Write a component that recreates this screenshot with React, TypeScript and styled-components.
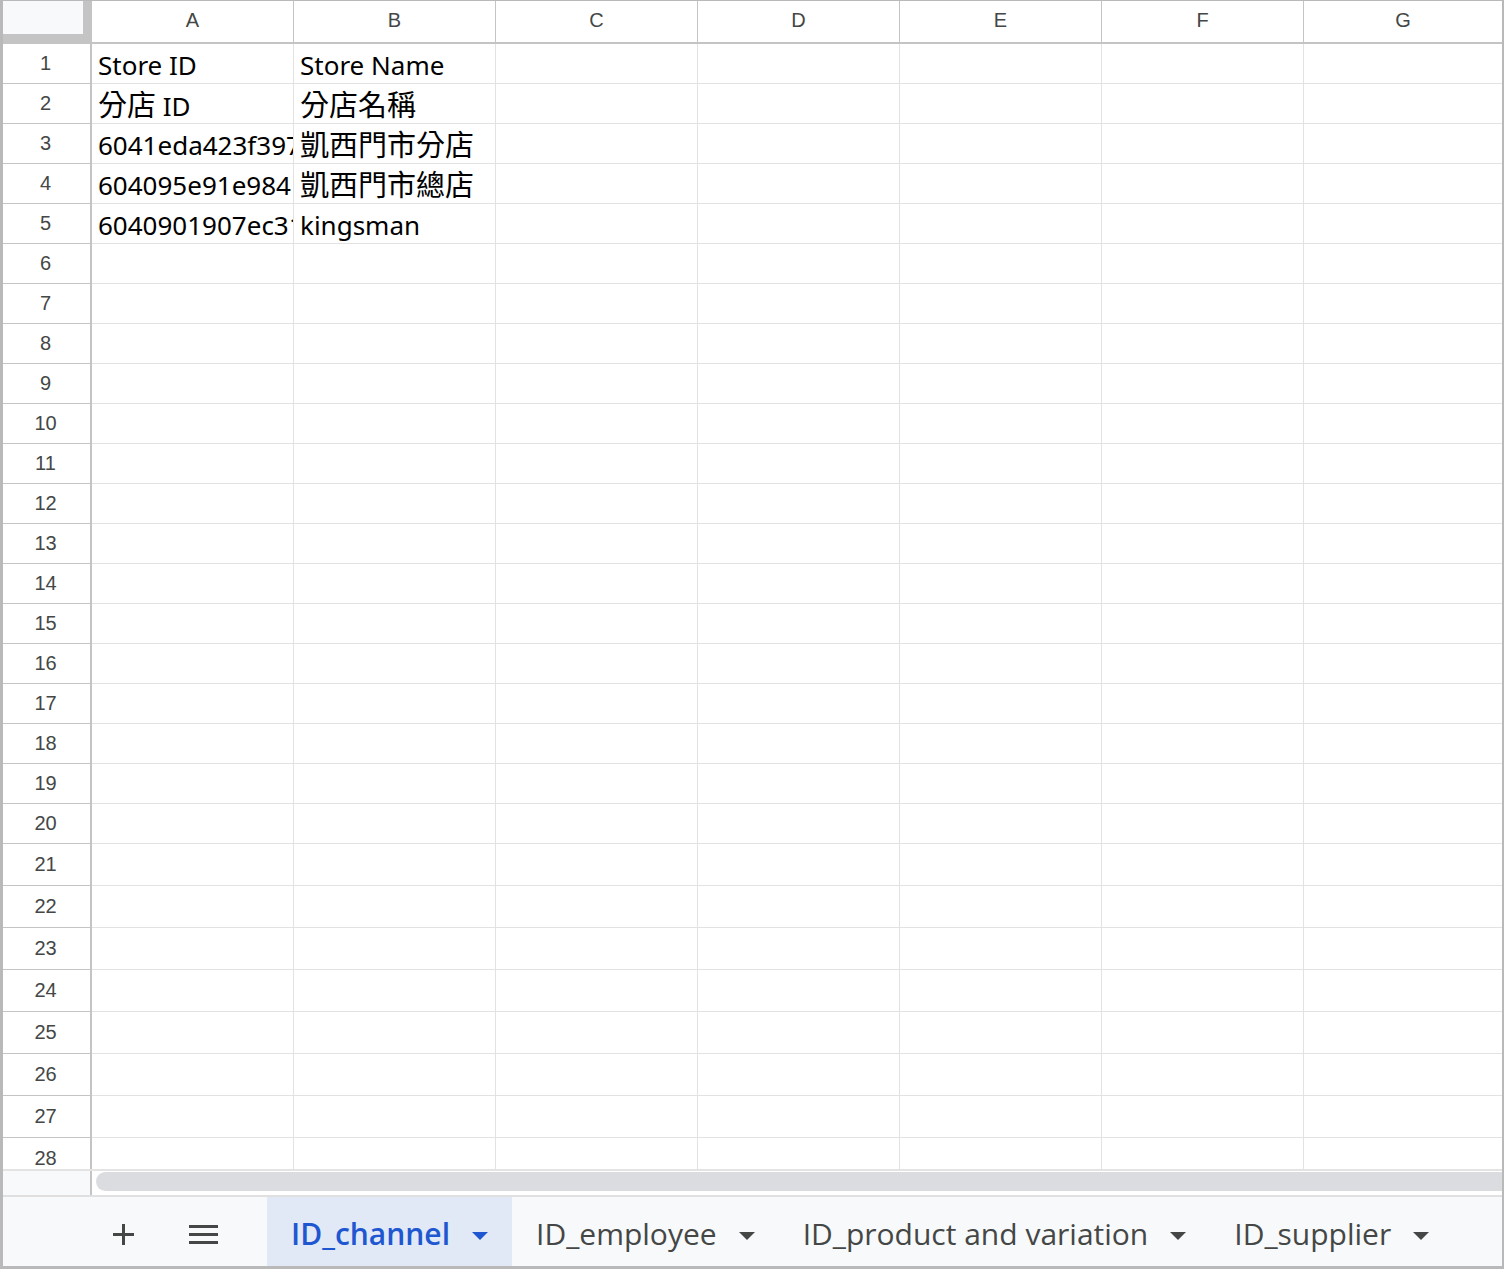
import React from "react";
import styled, { createGlobalStyle } from "styled-components";

const GlobalStyle = createGlobalStyle`
  * {
    box-sizing: border-box;
  }
  body {
    margin: 0;
    background: #ffffff;
  }
`;

const COLUMNS = ["A", "B", "C", "D", "E", "F", "G"];
const ROW_COUNT = 28;

// 시트 데이터 (A, B 열만 채워져 있음)
const sheetData: string[][] = [
  ["Store ID", "Store Name"],
  ["分店 ID", "分店名稱"],
  ["6041eda423f3970a5c1e2b8d", "凱西門市分店"],
  ["604095e91e9841a0c7d2f1a3", "凱西門市總店"],
  ["6040901907ec31f4a8b2d5c6", "kingsman"],
];

const sheetTabs = [
  { name: "ID_channel", active: true },
  { name: "ID_employee", active: false },
  { name: "ID_product and variation", active: false },
  { name: "ID_supplier", active: false },
];

const rowHeight = (row: number) => (row <= 20 ? 40 : 42);

// 한자 부분만 조금 더 크게 보이도록 분리
const renderText = (text: string) =>
  text.split(/([\u3400-\u9fff]+)/).map((part, idx) =>
    /[\u3400-\u9fff]/.test(part) ? <Han key={idx}>{part}</Han> : part
  );

export default function App() {
  return (
    <>
      <GlobalStyle />
      <Frame>
        <SheetViewport>
          <Grid>
            <Corner />
            {COLUMNS.map((col, idx) => (
              <ColHeader key={col} $last={idx === COLUMNS.length - 1}>
                {col}
              </ColHeader>
            ))}
            {Array.from({ length: ROW_COUNT }, (_, r) => (
              <React.Fragment key={r}>
                <RowHeader $height={rowHeight(r + 1)}>{r + 1}</RowHeader>
                {COLUMNS.map((col, c) => (
                  <Cell key={col} $last={c === COLUMNS.length - 1}>
                    {sheetData[r]?.[c] ? (
                      <CellText>{renderText(sheetData[r][c])}</CellText>
                    ) : null}
                  </Cell>
                ))}
              </React.Fragment>
            ))}
          </Grid>
        </SheetViewport>

        <ScrollStrip>
          <StripCorner />
          <Track>
            <Thumb />
          </Track>
        </ScrollStrip>

        <TabBar>
          <IconButton>
            <svg width="21" height="21" viewBox="0 0 21 21">
              <path d="M10.5 0v21M0 10.5h21" stroke="#444746" strokeWidth="3" />
            </svg>
          </IconButton>
          <IconButton>
            <svg width="29" height="19" viewBox="0 0 29 19">
              <path
                d="M0 1.5h29M0 9.5h29M0 17.5h29"
                stroke="#444746"
                strokeWidth="3"
              />
            </svg>
          </IconButton>
          <Tabs>
            {sheetTabs.map((tab) => (
              <Tab key={tab.name} $active={tab.active}>
                <span>{tab.name}</span>
                <svg width="16" height="8" viewBox="0 0 16 8">
                  <path d="M0 0h16L8 8z" fill="currentColor" />
                </svg>
              </Tab>
            ))}
          </Tabs>
        </TabBar>
      </Frame>
    </>
  );
}

const Frame = styled.div`
  width: 1504px;
  height: 1269px;
  display: flex;
  flex-direction: column;
  overflow: hidden;
  border-style: solid;
  border-color: #b9b9b9;
  border-width: 1px 2px 3px 3px;
  background: #ffffff;
`;

const SheetViewport = styled.div`
  height: 1168px;
  flex-shrink: 0;
  overflow: hidden;
`;

const Grid = styled.div`
  display: grid;
  grid-template-columns: 89px repeat(6, 202px) 198px;
  grid-template-rows: 43px repeat(20, 40px) repeat(8, 42px);
`;

const Corner = styled.div`
  background: #f8f9fa;
  border-right: 9px solid #c4c4c4;
  border-bottom: 10px solid #c4c4c4;
`;

const ColHeader = styled.div<{ $last: boolean }>`
  display: flex;
  align-items: center;
  justify-content: center;
  padding-bottom: 3px;
  border-right: ${(p) => (p.$last ? "none" : "1px solid #c4c4c4")};
  border-bottom: 2px solid #c4c4c4;
  font-family: "Liberation Sans", Arial, sans-serif;
  font-size: 20px;
  color: #444746;
`;

const RowHeader = styled.div<{ $height: number }>`
  height: ${(p) => p.$height}px;
  display: flex;
  align-items: center;
  justify-content: center;
  padding-right: 2px;
  border-right: 2px solid #c4c4c4;
  border-bottom: 1px solid #c4c4c4;
  font-family: "Liberation Sans", Arial, sans-serif;
  font-size: 20px;
  color: #444746;
`;

const Cell = styled.div<{ $last: boolean }>`
  display: flex;
  align-items: center;
  padding: 3px 0 0 6px;
  overflow: hidden;
  border-right: ${(p) => (p.$last ? "none" : "1px solid #e2e2e2")};
  border-bottom: 1px solid #e2e2e2;
  font-family: "Noto Sans", "Noto Sans CJK TC", sans-serif;
  font-size: 26px;
  color: #000000;
`;

const CellText = styled.span`
  white-space: pre;
  line-height: 30px;
`;

const Han = styled.span`
  font-family: "Noto Sans CJK TC", sans-serif;
  font-size: 29px;
  line-height: 1;
`;

const ScrollStrip = styled.div`
  height: 28px;
  flex-shrink: 0;
  display: flex;
  border-top: 2px solid #e3e3e3;
  border-bottom: 2px solid #e0e0e0;
`;

const StripCorner = styled.div`
  width: 89px;
  background: #f8f9fa;
  border-right: 2px solid #c4c4c4;
`;

const Track = styled.div`
  flex: 1;
  padding: 1px 0 0 4px;
`;

const Thumb = styled.div`
  height: 19px;
  background: #dadce0;
  border-radius: 10px 0 0 10px;
`;

const TabBar = styled.div`
  flex: 1;
  display: flex;
  align-items: stretch;
  padding-left: 100px;
  background: #f8f9fa;
`;

const IconButton = styled.div`
  width: 40px;
  display: flex;
  align-items: center;
  justify-content: center;
  padding-top: 5px;

  & + & {
    margin-left: 40px;
  }
`;

const Tabs = styled.div`
  display: flex;
  margin-left: 44px;
`;

const Tab = styled.div<{ $active: boolean }>`
  display: flex;
  align-items: center;
  gap: 22px;
  padding: 4px 24px 0;
  background: ${(p) => (p.$active ? "#e1e9f7" : "transparent")};
  color: ${(p) => (p.$active ? "#1f57d0" : "#444746")};
  font-family: "Open Sans", sans-serif;
  font-size: 30px;
  font-weight: ${(p) => (p.$active ? 600 : 400)};
  white-space: nowrap;

  & svg {
    margin-top: 4px;
  }
`;
